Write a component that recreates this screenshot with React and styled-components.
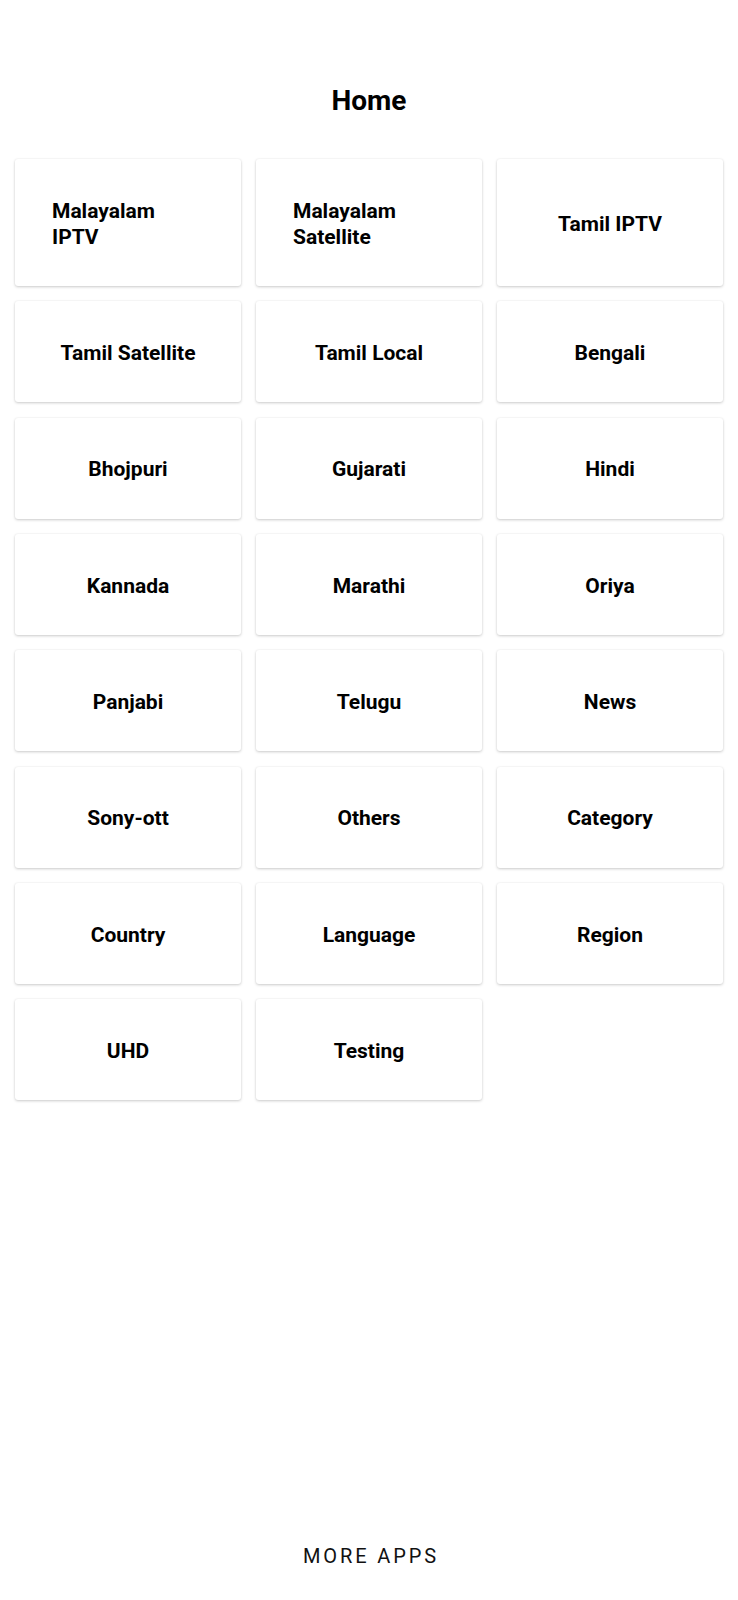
import React from "react";
import styled, { createGlobalStyle } from "styled-components";

const Global = createGlobalStyle`
  html, body { margin: 0; padding: 0; background: #ffffff; }
  body { font-family: Roboto, "Noto Sans", "Liberation Sans", sans-serif; color: #000; }
  * { box-sizing: border-box; }
`;

const Page = styled.div`
  min-height: 100vh;
  display: flex;
  flex-direction: column;
`;

const Header = styled.header`
  padding-top: 85px;
  height: 159px;
  text-align: center;
`;

const Title = styled.h1`
  margin: 0;
  font-size: 28px;
  line-height: 32px;
  font-weight: 700;
  color: #000;
`;

const Grid = styled.div`
  display: grid;
  grid-template-columns: repeat(3, 1fr);
  column-gap: 15px;
  row-gap: 15.35px;
  padding: 0 15px;
`;

const Card = styled.button`
  display: flex;
  align-items: center;
  justify-content: center;
  min-height: 101px;
  padding: 38.5px 37px 36.5px;
  border: none;
  border-radius: 3px;
  background: #fff;
  box-shadow: 0 1px 3px rgba(0, 0, 0, 0.2), 0 0 2px rgba(0, 0, 0, 0.06);
  cursor: pointer;
  font: inherit;
`;

const CardLabel = styled.span`
  display: block;
  text-align: left;
  font-size: 21px;
  line-height: 26px;
  font-weight: 700;
  color: #000;
`;

const Spacer = styled.div`
  flex: 1;
`;

const Footer = styled.footer`
  display: flex;
  justify-content: center;
  padding-bottom: 20px;
`;

const MoreButton = styled.button`
  height: 48px;
  padding: 0 16px 0 20px;
  border: none;
  background: transparent;
  font-family: Roboto, "Liberation Sans", sans-serif;
  font-size: 20px;
  font-weight: 400;
  letter-spacing: 2.9px;
  text-transform: uppercase;
  color: #111;
  cursor: pointer;
`;

const items = [
  "Malayalam IPTV",
  "Malayalam Satellite",
  "Tamil IPTV",
  "Tamil Satellite",
  "Tamil Local",
  "Bengali",
  "Bhojpuri",
  "Gujarati",
  "Hindi",
  "Kannada",
  "Marathi",
  "Oriya",
  "Panjabi",
  "Telugu",
  "News",
  "Sony-ott",
  "Others",
  "Category",
  "Country",
  "Language",
  "Region",
  "UHD",
  "Testing",
];

export default function App() {
  return (
    <Page>
      <Global />
      <Header>
        <Title>Home</Title>
      </Header>
      <Grid>
        {items.map((name) => (
          <Card key={name}>
            <CardLabel>{name}</CardLabel>
          </Card>
        ))}
      </Grid>
      <Spacer />
      <Footer>
        <MoreButton>More Apps</MoreButton>
      </Footer>
    </Page>
  );
}
